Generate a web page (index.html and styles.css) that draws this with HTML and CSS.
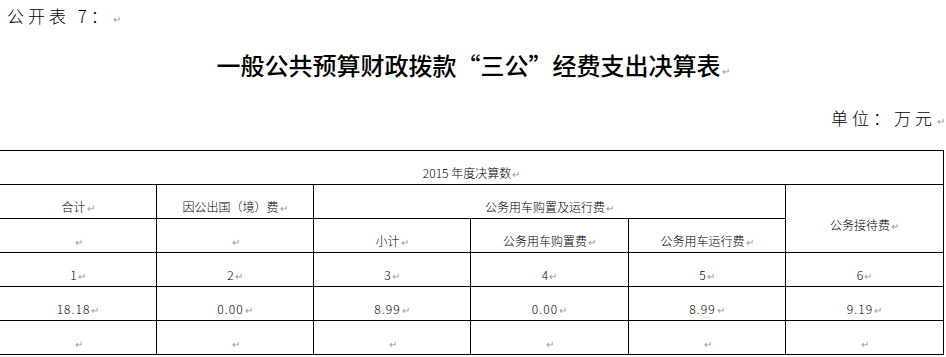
FILE: index.html
```html
<!DOCTYPE html>
<html lang="zh-CN">
<head>
<meta charset="utf-8">
<title>一般公共预算财政拨款“三公”经费支出决算表</title>
<link rel="stylesheet" href="styles.css">
</head>
<body>
<div class="page">
  <div class="doc-label">公开表 7：<span class="pm">↵</span></div>
  <h1 class="title">一般公共预算财政拨款“三公”经费支出决算表<span class="pm">↵</span></h1>
  <div class="unit">单位：万元<span class="pm">↵</span></div>
  <table class="report">
    <colgroup>
      <col class="c1"><col class="c2"><col class="c3"><col class="c4"><col class="c5"><col class="c6">
    </colgroup>
    <tr>
      <td colspan="6">2015 年度决算数<span class="pm">↵</span></td>
    </tr>
    <tr>
      <td>合计<span class="pm">↵</span></td>
      <td>因公出国（境）费<span class="pm">↵</span></td>
      <td colspan="3">公务用车购置及运行费<span class="pm">↵</span></td>
      <td rowspan="2" class="merged">公务接待费<span class="pm">↵</span></td>
    </tr>
    <tr>
      <td><span class="pm">↵</span></td>
      <td><span class="pm">↵</span></td>
      <td>小计<span class="pm">↵</span></td>
      <td>公务用车购置费<span class="pm">↵</span></td>
      <td>公务用车运行费<span class="pm">↵</span></td>
    </tr>
    <tr>
      <td>1<span class="pm">↵</span></td>
      <td>2<span class="pm">↵</span></td>
      <td>3<span class="pm">↵</span></td>
      <td>4<span class="pm">↵</span></td>
      <td>5<span class="pm">↵</span></td>
      <td>6<span class="pm">↵</span></td>
    </tr>
    <tr class="nums">
      <td>18.18<span class="pm">↵</span></td>
      <td>0.00<span class="pm">↵</span></td>
      <td>8.99<span class="pm">↵</span></td>
      <td>0.00<span class="pm">↵</span></td>
      <td>8.99<span class="pm">↵</span></td>
      <td>9.19<span class="pm">↵</span></td>
    </tr>
    <tr>
      <td><span class="pm">↵</span></td>
      <td><span class="pm">↵</span></td>
      <td><span class="pm">↵</span></td>
      <td><span class="pm">↵</span></td>
      <td><span class="pm">↵</span></td>
      <td><span class="pm">↵</span></td>
    </tr>
  </table>
</div>
</body>
</html>
```

FILE: styles.css
```css
html, body {
  margin: 0;
  padding: 0;
  background: #fff;
}

body {
  font-family: "Noto Sans CJK SC", "Noto Sans", sans-serif;
  color: #000;
  overflow: hidden;
}

.page {
  width: 946px;
}

.pm {
  color: #9a9a9a;
  font-size: 10px;
  font-weight: 400;
  letter-spacing: 0;
  margin-left: 1px;
}

.doc-label {
  height: 32px;
  line-height: 32px;
  padding-left: 7px;
  font-size: 17px;
  letter-spacing: 4px;
  font-weight: 300;
}

.title {
  margin: 16px 0 0 0;
  height: 34px;
  line-height: 34px;
  font-size: 24px;
  font-weight: 500;
  text-align: center;
  letter-spacing: 0;
}

.unit {
  margin-top: 24px;
  height: 24px;
  line-height: 24px;
  text-align: right;
  padding-right: 1px;
  font-size: 17px;
  letter-spacing: 4px;
  font-weight: 300;
}

.report {
  margin-top: 20px;
  margin-left: -1px;
  width: 945px;
  border-collapse: collapse;
  table-layout: fixed;
  font-size: 12px;
  font-weight: 300;
}

.c1 { width: 157px; }
.c2 { width: 157px; }
.c3 { width: 157px; }
.c4 { width: 158px; }
.c5 { width: 157px; }
.c6 { width: 158px; }

.report td {
  border: 1px solid #000;
  height: 34px;
  padding: 0 0 3px 0;
  box-sizing: border-box;
  text-align: center;
  vertical-align: bottom;
  line-height: 14px;
}

.report td.merged {
  vertical-align: middle;
  padding: 14px 0 0 0;
}

.nums td {
  letter-spacing: 1px;
}
```
